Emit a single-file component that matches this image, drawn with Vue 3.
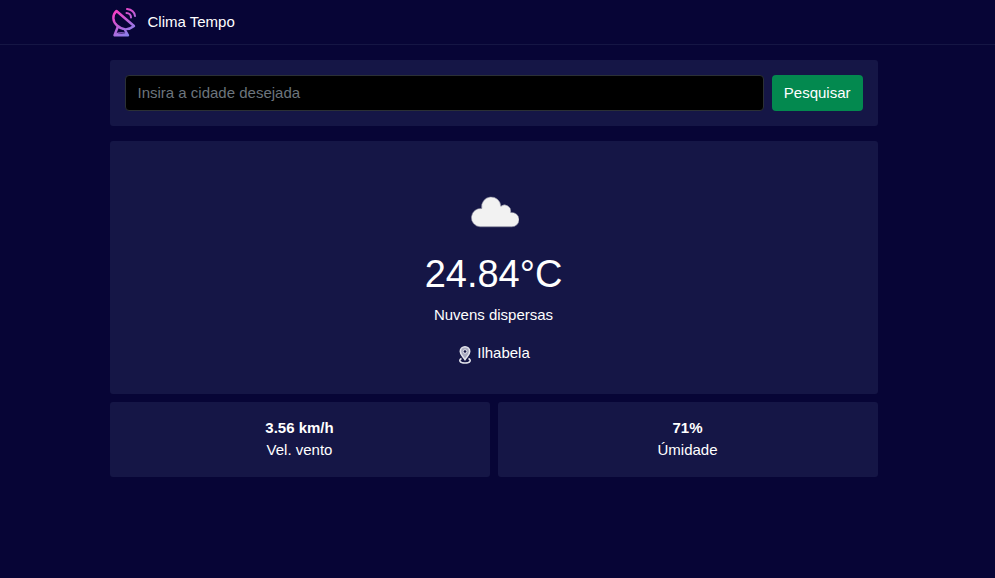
<script setup>
import { ref } from 'vue'

const city = ref('')
const weather = ref({
  temperature: '24.84°C',
  description: 'Nuvens dispersas',
  place: 'Ilhabela',
})
const details = ref([
  { label: 'Vel. vento', value: '3.56 km/h' },
  { label: 'Úmidade', value: '71%' },
])
</script>

<template>
  <div class="page">
    <header class="header">
      <div class="container brand">
        <svg class="logo" viewBox="0 0 32 38" fill="none" stroke="url(#brand-gradient)" stroke-width="2.4" stroke-linecap="round" stroke-linejoin="round" aria-hidden="true">
          <defs>
            <linearGradient id="brand-gradient" gradientUnits="userSpaceOnUse" x1="7" y1="8" x2="24" y2="32">
              <stop offset="0" stop-color="#fa3bc3" />
              <stop offset="0.5" stop-color="#bd62d8" />
              <stop offset="1" stop-color="#8085ee" />
            </linearGradient>
          </defs>
          <path d="M8.500 8C4 12 4.500 18.500 9 22.500C14 27 20.500 27.500 26 23Z" />
          <path d="M9.500 24.500L6.500 32.300H20L17 27" />
          <path d="M8 31C10 29.500 17 29.500 19 31" stroke-width="1.200" />
          <path d="M18.500 10C21 10 23 12 23 14.500" stroke-width="2" />
          <path d="M19 6C23.500 6.500 26.500 9 27 13" stroke-width="2" />
        </svg>
        <span>Clima Tempo</span>
      </div>
    </header>

    <main class="container content">
      <form class="card search" @submit.prevent>
        <input v-model="city" class="field" type="text" placeholder="Insira a cidade desejada" aria-label="Cidade" />
        <button class="button" type="submit">Pesquisar</button>
      </form>

      <section class="card current">
        <svg class="cloud" viewBox="0 0 50 50" aria-hidden="true">
          <path d="M11 41.800A9.200 9.200 0 1 1 12.800 23.500A9.600 9.600 0 1 1 31.800 21.300A6.200 6.200 0 0 1 41.700 27.500A7.200 7.200 0 1 1 42.500 41.800Z" fill="#f2f2f2" stroke="#85859a" stroke-width="0.600" />
        </svg>
        <h1 class="temperature">{{ weather.temperature }}</h1>
        <p class="description">{{ weather.description }}</p>
        <p class="place">
          <svg class="pin" viewBox="0 0 14 18" fill="none" stroke="#e2e3eb" aria-hidden="true">
            <path d="M4.500 12.500C1.500 14 2.500 17 8 17C13.500 17 14.500 14 11.500 12.500" stroke-width="1.600" />
            <path d="M8 13.500C6.500 11 3.300 9 3.300 5.500A4.700 4.700 0 0 1 12.700 5.500C12.700 9 9.500 11 8 13.500Z" stroke-width="1.600" fill="#a9aabf" />
            <circle cx="8" cy="5.500" r="1.800" stroke-width="1" fill="#151646" />
          </svg>
          <span>{{ weather.place }}</span>
        </p>
      </section>

      <section class="details">
        <div v-for="item in details" :key="item.label" class="card detail">
          <strong>{{ item.value }}</strong>
          <span>{{ item.label }}</span>
        </div>
      </section>
    </main>
  </div>
</template>

<style>
body {
  margin: 0;
  background: #070536;
}
</style>

<style scoped>
.page {
  box-sizing: border-box;
  min-height: 100vh;
  color: #fff;
  font: 15px/22px "Liberation Sans", Arial, sans-serif;
}
.container {
  box-sizing: border-box;
  width: 100%;
  max-width: 768px;
  margin: 0 auto;
}
.header {
  padding-right: 8px;
  border-bottom: 1px solid #151644;
}
.brand {
  display: flex;
  align-items: center;
  gap: 8px;
  height: 44px;
}
.logo {
  width: 32px;
  height: 38px;
  margin-left: -2px;
}
.content {
  box-sizing: content-box;
  width: auto;
  padding: 15px 8px 15px 0;
}
.card {
  background: #151646;
  border-radius: 3px;
}
.search {
  display: flex;
  gap: 8px;
  padding: 15px;
  margin-bottom: 15px;
}
.field {
  box-sizing: border-box;
  flex: 1;
  min-width: 0;
  height: 36px;
  padding: 0 12px 2px;
  border: 1px solid #2b3035;
  border-radius: 4px;
  background: #000;
  color: #dee2e6;
  font: inherit;
}
.field::placeholder {
  color: #6c757d;
  opacity: 1;
}
.button {
  height: 36px;
  padding: 0 12px;
  border: 0;
  border-radius: 4px;
  background: #03894f;
  color: #fff;
  font: inherit;
  cursor: pointer;
}
.current {
  display: flex;
  flex-direction: column;
  align-items: center;
  padding: 44px 16px 30px;
  margin-bottom: 8px;
}
.cloud {
  width: 50px;
  height: 50px;
}
.temperature {
  margin: 15px 0 6px;
  font-size: 38px;
  font-weight: 400;
  line-height: 48px;
}
.description {
  margin: 0 0 16px;
}
.place {
  display: flex;
  align-items: center;
  gap: 6px;
  margin: 0;
}
.pin {
  width: 14px;
  height: 18px;
  margin-top: 4px;
}
.details {
  display: grid;
  grid-template-columns: 1fr 1fr;
  gap: 8px;
}
.detail {
  display: flex;
  flex-direction: column;
  align-items: center;
  padding: 15px 15px 16px;
}
</style>
